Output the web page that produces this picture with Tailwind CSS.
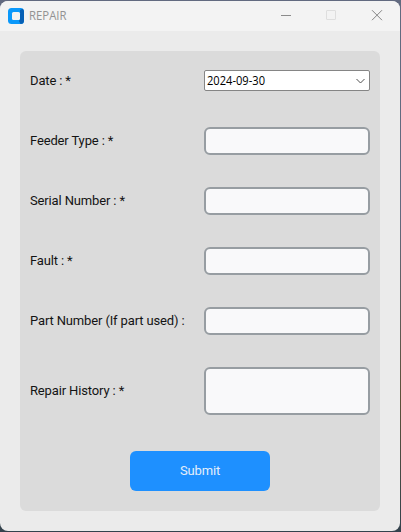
<!DOCTYPE html>
<html lang="en">
<head>
<meta charset="utf-8">
<title>REPAIR</title>
<script src="https://cdn.jsdelivr.net/npm/@tailwindcss/browser@4"></script>
</head>
<body class="w-[401px] h-[532px] overflow-hidden pt-px pr-px pb-px bg-linear-to-b from-[#626a80] from-40% via-[#5c5138] via-75% to-[#33424d] font-['Roboto',sans-serif] text-[13px] tracking-[-0.14px] text-[#141414]">
<div class="h-[530px] w-[400px] rounded-[8px] overflow-hidden bg-[#ebebeb] flex flex-col">
  <header class="h-[30px] shrink-0 bg-[#f3f3f3] flex items-center pl-2">
    <svg class="size-4 shrink-0" viewBox="0 0 16 16">
      <rect width="16" height="16" rx="3.5" fill="#0a98fa"/>
      <path d="M12 2L14.5 .8Q16 1.7 16 3.5V12.5Q16 16 12.5 16L11 13L12 11Z" fill="#0760b5"/>
      <rect x="4" y="4" width="8" height="8" rx="1.5" fill="#f3f3f3"/>
    </svg>
    <span class="ml-[5px] w-[38px] h-4 flex items-center"><svg class="w-[40px] h-4 shrink-0 overflow-visible" viewBox="0 0 40 16"><text x="0" y="12" textLength="37.5" lengthAdjust="spacingAndGlyphs" class="font-['Open_Sans',sans-serif] text-[12.5px] tracking-normal fill-[#929292]">REPAIR</text></svg></span>
    <div class="ml-auto flex items-center">
      <svg class="w-[45px] h-[30px]" viewBox="0 0 45 30"><path d="M17 14.5H27" stroke="#8b8b8b" fill="none"/></svg>
      <svg class="w-[45px] h-[30px]" viewBox="0 0 45 30"><rect x="17.5" y="9.5" width="9" height="9" rx=".5" stroke="#dedede" fill="none"/></svg>
      <svg class="w-[46px] h-[30px]" viewBox="0 0 46 30"><path d="M18 9.2L28 19.2M28 9.2L18 19.2" stroke="#858585" fill="none"/></svg>
    </div>
  </header>
  <main class="p-5">
    <form class="h-[460px] rounded-[6px] bg-[#dbdbdb] px-2.5">
      <div class="h-[60px] flex items-center justify-between">
        <label>Date : *</label>
        <div class="w-[166px] h-[21px] mb-px bg-white border border-[#858585] rounded-[2px] flex items-center justify-between pr-1">
          <svg class="w-[64px] h-[19px] overflow-visible" viewBox="0 0 64 19"><text x="2" y="14" textLength="58" lengthAdjust="spacingAndGlyphs" class="font-['Open_Sans',sans-serif] text-[12px] tracking-normal fill-black">2024-09-30</text></svg>
          <svg class="w-[9px] h-[6px]" viewBox="0 0 9 6"><path d="M.5 1L4.5 5L8.5 1" fill="none" stroke="#505050"/></svg>
        </div>
      </div>
      <div class="h-[60px] flex items-center justify-between">
        <label>Feeder Type : *</label>
        <div class="w-[166px] h-7 rounded-[6px] border-2 border-[#979da2] bg-[#f9f9fa]"></div>
      </div>
      <div class="h-[60px] flex items-center justify-between">
        <label>Serial Number : *</label>
        <div class="w-[166px] h-7 rounded-[6px] border-2 border-[#979da2] bg-[#f9f9fa]"></div>
      </div>
      <div class="h-[60px] flex items-center justify-between">
        <label>Fault : *</label>
        <div class="w-[166px] h-7 rounded-[6px] border-2 border-[#979da2] bg-[#f9f9fa]"></div>
      </div>
      <div class="h-[60px] flex items-center justify-between">
        <label>Part Number (If part used) :</label>
        <div class="w-[166px] h-7 rounded-[6px] border-2 border-[#979da2] bg-[#f9f9fa]"></div>
      </div>
      <div class="h-20 flex items-center justify-between">
        <label>Repair History : *</label>
        <div class="w-[166px] h-12 rounded-[6px] border-2 border-[#979da2] bg-[#f9f9fa]"></div>
      </div>
      <div class="h-20 flex items-center justify-center">
        <button type="button" class="w-[140px] h-10 rounded-[6px] bg-[#1e90ff] text-[#e4eefa]">Submit</button>
      </div>
    </form>
  </main>
</div>
</body>
</html>
